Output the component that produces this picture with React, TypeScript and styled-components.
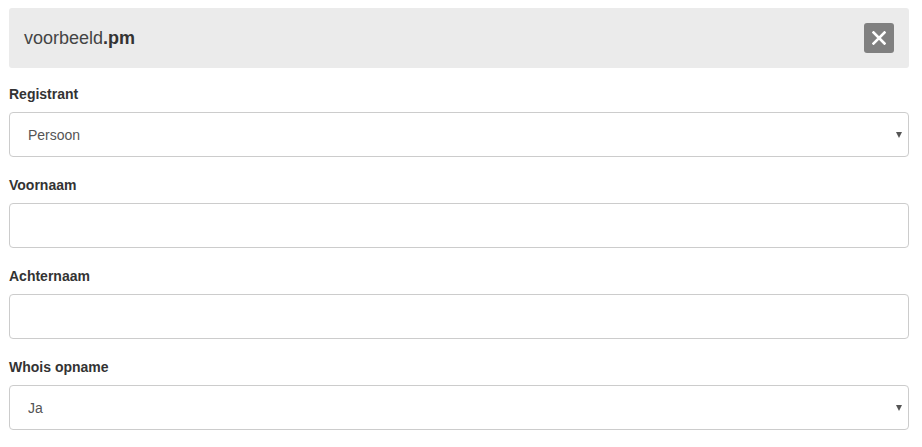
import React from "react";
import styled, { createGlobalStyle } from "styled-components";

const Global = createGlobalStyle`
  html, body { margin: 0; padding: 0; background: #fff; }
  body { font-family: "Liberation Sans", Arial, sans-serif; color: #333; }
  * { box-sizing: border-box; }
`;

const Page = styled.div`
  width: 900px;
  margin: 8px 0 0 9px;
`;

const Header = styled.div`
  height: 60px;
  background: #ebebeb;
  border-radius: 3px;
  display: flex;
  align-items: center;
  justify-content: space-between;
  padding: 0 15px 0 15px;
`;

const Title = styled.div`
  font-size: 18px;
  color: #444;
  line-height: 20px;
  b { color: #333; font-weight: 700; }
`;

const CloseButton = styled.button`
  width: 30px;
  height: 30px;
  border: none;
  border-radius: 3px;
  background: #808080;
  display: flex;
  align-items: center;
  justify-content: center;
  padding: 0;
  cursor: pointer;
`;

const Form = styled.div`
  padding-top: 16px;
`;

const Group = styled.div`
  margin-bottom: 18px;
`;

const Label = styled.label`
  display: block;
  font-size: 14px;
  line-height: 20px;
  font-weight: 700;
  color: #333;
  margin-bottom: 8px;
`;

const Input = styled.input`
  display: block;
  width: 100%;
  height: 45px;
  border: 1px solid #ccc;
  border-radius: 4px;
  padding: 0 18px;
  font-family: "Liberation Sans", Arial, sans-serif;
  font-size: 14px;
  color: #555;
  background: #fff;
  outline: none;
`;

const SelectWrap = styled.div`
  position: relative;
`;

const Select = styled.select`
  display: block;
  width: 100%;
  height: 45px;
  border: 1px solid #ccc;
  border-radius: 4px;
  padding: 0 18px;
  font-family: "Liberation Sans", Arial, sans-serif;
  font-size: 14px;
  color: #555;
  background: #fff;
  appearance: none;
  -webkit-appearance: none;
  outline: none;
`;

const Arrow = styled.span`
  position: absolute;
  right: 7px;
  top: 50%;
  margin-top: -3px;
  width: 0;
  height: 0;
  border-left: 3.5px solid transparent;
  border-right: 3.5px solid transparent;
  border-top: 6px solid #555;
  pointer-events: none;
`;

const SelectField = ({ label, value, options }: { label: string; value: string; options: string[] }) => (
  <Group>
    <Label>{label}</Label>
    <SelectWrap>
      <Select defaultValue={value}>
        {options.map((o) => (
          <option key={o}>{o}</option>
        ))}
      </Select>
      <Arrow />
    </SelectWrap>
  </Group>
);

const TextField = ({ label }: { label: string }) => (
  <Group>
    <Label>{label}</Label>
    <Input type="text" />
  </Group>
);

export default function App() {
  return (
    <>
      <Global />
      <Page>
        <Header>
          <Title>
            voorbeeld<b>.pm</b>
          </Title>
          <CloseButton aria-label="Sluiten">
            <svg width="14" height="14" viewBox="0 0 14 14">
              <path d="M1.5 1.5 L12.5 12.5 M12.5 1.5 L1.5 12.5" stroke="#fff" strokeWidth="2.6" strokeLinecap="square" />
            </svg>
          </CloseButton>
        </Header>
        <Form>
          <SelectField label="Registrant" value="Persoon" options={["Persoon", "Organisatie"]} />
          <TextField label="Voornaam" />
          <TextField label="Achternaam" />
          <SelectField label="Whois opname" value="Ja" options={["Ja", "Nee"]} />
        </Form>
      </Page>
    </>
  );
}
